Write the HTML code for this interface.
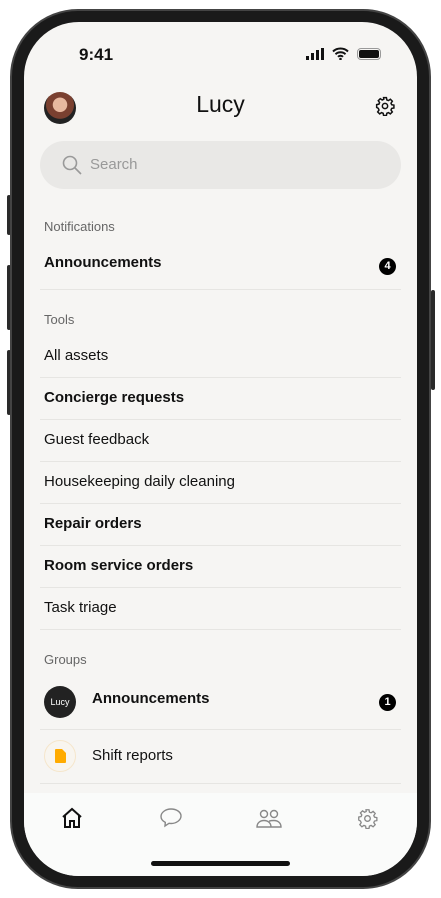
<!DOCTYPE html>
<html><head><style>
*{margin:0;padding:0;box-sizing:border-box}
body{width:441px;height:898px;background:#fff;position:relative;overflow:hidden;font-family:"Liberation Sans",sans-serif;color:#111}
.frame{position:absolute;left:10px;top:9px;width:421px;height:880px;border-radius:68px;background:#1a1a1a;border:2px solid #444}
.screen{position:absolute;left:24px;top:22px;width:393px;height:854px;border-radius:55px;background:#f6f5f3;overflow:hidden}
.abs{position:absolute}
.lbl{position:absolute;left:20px;font-size:13px;color:#666}
.it{position:absolute;left:20px;font-size:15px;color:#111}
.b{font-weight:bold}
.div{position:absolute;left:16px;width:361px;height:1px;background:#e6e5e2}
.badge{position:absolute;width:17px;height:17px;border-radius:50%;background:#000;color:#fff;font-size:11px;font-weight:bold;text-align:center;line-height:17px}
.side{position:absolute;background:#2a2a2a;width:4px;border-radius:2px}
</style></head><body>
<div class="side" style="left:7px;top:195px;height:40px"></div>
<div class="side" style="left:7px;top:265px;height:65px"></div>
<div class="side" style="left:7px;top:350px;height:65px"></div>
<div class="side" style="left:431px;top:290px;height:100px"></div>
<div class="frame"></div>
<div class="screen">
 <div class="abs" style="left:55px;top:23px;font-size:17px;font-weight:bold">9:41</div>
 <svg class="abs" style="left:282px;top:26px" width="20" height="12"><rect x="0" y="8" width="3" height="4" fill="#111"/><rect x="5" y="5" width="3" height="7" fill="#111"/><rect x="10" y="2" width="3" height="10" fill="#111"/><rect x="15" y="0" width="3" height="12" fill="#111"/></svg>
 <svg class="abs" style="left:308px;top:25px" width="17" height="13" viewBox="0 0 17 13"><path d="M1 4.5a11 11 0 0 1 15 0M3.5 7.2a7.5 7.5 0 0 1 10 0M6 9.8a3.5 3.5 0 0 1 5 0" stroke="#111" stroke-width="2" fill="none"/><circle cx="8.5" cy="12" r="1.3" fill="#111"/></svg>
 <div class="abs" style="left:333px;top:26px;width:24px;height:12px;border-radius:4px;border:1px solid #999;padding:1px"><div style="width:100%;height:100%;background:#111;border-radius:2px"></div></div>
 <div class="abs" style="left:20px;top:70px;width:32px;height:32px;border-radius:50%;background:radial-gradient(circle at 50% 40%,#e8b9a0 0 28%,#7a4030 30% 55%,#222 57%);"></div>
 <div class="abs" style="left:0;width:393px;top:69px;text-align:center;font-size:23px">Lucy</div>
 <svg class="abs" style="left:351px;top:74px" width="20" height="20" viewBox="0 0 24 24" fill="none" stroke="#111" stroke-width="1.8"><circle cx="12" cy="12" r="3.2"/><path d="M10.3 2h3.4l.5 2.7 1.9.8 2.3-1.6 2.4 2.4-1.6 2.3.8 1.9 2.7.5v3.4l-2.7.5-.8 1.9 1.6 2.3-2.4 2.4-2.3-1.6-1.9.8-.5 2.7h-3.4l-.5-2.7-1.9-.8-2.3 1.6-2.4-2.4 1.6-2.3-.8-1.9L2 13.7v-3.4l2.7-.5.8-1.9-1.6-2.3 2.4-2.4 2.3 1.6 1.9-.8z"/></svg>
 <div class="abs" style="left:16px;top:119px;width:361px;height:48px;border-radius:24px;background:#e9e8e6"></div>
 <svg class="abs" style="left:38px;top:133px" width="20" height="20" viewBox="0 0 20 20" fill="none" stroke="#999" stroke-width="1.6"><circle cx="8" cy="8" r="6.5"/><path d="M13 13l6 6"/></svg>
 <div class="abs" style="left:66px;top:134px;font-size:15px;color:#999">Search</div>
 <div class="lbl" style="top:197px">Notifications</div>
 <div class="it b" style="top:232px">Announcements</div>
 <div class="badge" style="left:355px;top:236px">4</div>
 <div class="div" style="top:267px"></div>
 <div class="lbl" style="top:290px">Tools</div>
 <div class="it" style="top:325px">All assets</div><div class="div" style="top:355px"></div>
 <div class="it b" style="top:367px">Concierge requests</div><div class="div" style="top:397px"></div>
 <div class="it" style="top:409px">Guest feedback</div><div class="div" style="top:439px"></div>
 <div class="it" style="top:451px">Housekeeping daily cleaning</div><div class="div" style="top:481px"></div>
 <div class="it b" style="top:493px">Repair orders</div><div class="div" style="top:523px"></div>
 <div class="it b" style="top:535px">Room service orders</div><div class="div" style="top:565px"></div>
 <div class="it" style="top:577px">Task triage</div><div class="div" style="top:607px"></div>
 <div class="lbl" style="top:630px">Groups</div>
 <div class="abs" style="left:20px;top:664px;width:32px;height:32px;border-radius:50%;background:#222;color:#fff;font-size:9px;text-align:center;line-height:32px">Lucy</div>
 <div class="it b" style="left:68px;top:668px">Announcements</div>
 <div class="badge" style="left:355px;top:672px">1</div>
 <div class="div" style="top:707px"></div>
 <div class="abs" style="left:20px;top:718px;width:32px;height:32px;border-radius:50%;border:1px solid #f5e6cc;background:#f8f5ef"></div>
 <svg class="abs" style="left:31px;top:727px" width="11" height="14" viewBox="0 0 11 14"><path d="M1 0h6l4 4v9a1 1 0 0 1-1 1H1a1 1 0 0 1-1-1V1a1 1 0 0 1 1-1z" fill="#ffab00"/></svg>
 <div class="it" style="left:68px;top:725px">Shift reports</div>
 <div class="div" style="top:761px"></div>
 <div class="abs" style="left:0;top:771px;width:393px;height:83px;background:#fafbfa"></div>
 <svg class="abs" style="left:37px;top:785px" width="22" height="22" viewBox="0 0 22 22" fill="none" stroke="#111" stroke-width="2"><path d="M2 10L11 2l9 8M4 8v12h5v-6h4v6h5V8"/></svg>
 <svg class="abs" style="left:136px;top:786px" width="22" height="20" viewBox="0 0 22 20" fill="none" stroke="#888" stroke-width="1.4"><path d="M11 1C5.5 1 1 4.5 1 8.5c0 2.5 1.7 4.6 4.3 5.9L5 18l4-2.7c.7.1 1.3.2 2 .2 5.5 0 10-3.5 10-7.5S16.5 1 11 1z"/></svg>
 <svg class="abs" style="left:232px;top:787px" width="26" height="20" viewBox="0 0 26 20" fill="none" stroke="#888" stroke-width="1.4"><circle cx="8" cy="5" r="3.5"/><circle cx="18" cy="5" r="3.5"/><path d="M1 18c0-4 3-6.5 7-6.5s7 2.5 7 6.5zM13 12.2c1.3-.5 3-.7 5-.7 4 0 7 2.5 7 6.5h-10"/></svg>
 <svg class="abs" style="left:333px;top:786px" width="21" height="21" viewBox="0 0 24 24" fill="none" stroke="#888" stroke-width="1.5"><circle cx="12" cy="12" r="3.2"/><path d="M10.3 2h3.4l.5 2.7 1.9.8 2.3-1.6 2.4 2.4-1.6 2.3.8 1.9 2.7.5v3.4l-2.7.5-.8 1.9 1.6 2.3-2.4 2.4-2.3-1.6-1.9.8-.5 2.7h-3.4l-.5-2.7-1.9-.8-2.3 1.6-2.4-2.4 1.6-2.3-.8-1.9L2 13.7v-3.4l2.7-.5.8-1.9-1.6-2.3 2.4-2.4 2.3 1.6 1.9-.8z"/></svg>
 <div class="abs" style="left:127px;top:839px;width:139px;height:5px;border-radius:3px;background:#111"></div>
</div>
</body></html>
